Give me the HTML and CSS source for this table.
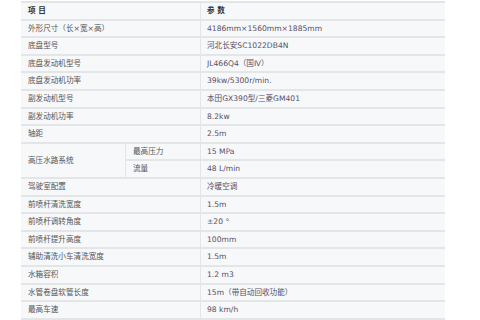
FILE: index.html
```html
<!DOCTYPE html>
<html lang="zh">
<head>
<meta charset="utf-8">
<title>参数</title>
<link rel="stylesheet" href="styles.css">
</head>
<body>
<table class="spec">
  <colgroup><col class="c1"><col class="c2"><col class="c3"></colgroup>
  <tr class="head"><td colspan="2">项 目</td><td class="val">参 数</td></tr>
  <tr><td colspan="2">外形尺寸（长×宽×高）</td><td class="val">4186mm×1560mm×1885mm</td></tr>
  <tr><td colspan="2">底盘型号</td><td class="val">河北长安SC1022DB4N</td></tr>
  <tr><td colspan="2">底盘发动机型号</td><td class="val">JL466Q4（国Ⅳ）</td></tr>
  <tr><td colspan="2">底盘发动机功率</td><td class="val">39kw/5300r/min.</td></tr>
  <tr><td colspan="2">副发动机型号</td><td class="val">本田GX390型/三菱GM401</td></tr>
  <tr><td colspan="2">副发动机功率</td><td class="val">8.2kw</td></tr>
  <tr><td colspan="2">轴距</td><td class="val">2.5m</td></tr>
  <tr><td rowspan="2" class="merge">高压水路系统</td><td class="sub">最高压力</td><td class="val">15 MPa</td></tr>
  <tr><td class="sub">流量</td><td class="val">48 L/min</td></tr>
  <tr><td colspan="2">驾驶室配置</td><td class="val">冷暖空调</td></tr>
  <tr><td colspan="2">前喷杆清洗宽度</td><td class="val">1.5m</td></tr>
  <tr><td colspan="2">前喷杆调转角度</td><td class="val">±20 °</td></tr>
  <tr><td colspan="2">前喷杆提升高度</td><td class="val">100mm</td></tr>
  <tr><td colspan="2">辅助清洗小车清洗宽度</td><td class="val">1.5m</td></tr>
  <tr><td colspan="2">水箱容积</td><td class="val">1.2 m3</td></tr>
  <tr><td colspan="2">水管卷盘软管长度</td><td class="val">15m（带自动回收功能）</td></tr>
  <tr><td colspan="2">最高车速</td><td class="val">98 km/h</td></tr>
</table>
</body>
</html>
```
FILE: styles.css
```css
html, body {
  margin: 0;
  padding: 0;
  background: #ffffff;
}
.spec {
  margin: 1px 0 0 21px;
  width: 424px;
  table-layout: fixed;
  border-collapse: separate;
  border-spacing: 0;
  border-top: 2px solid #e4e5e7;
  font-family: "DejaVu Sans", "Noto Sans CJK SC", sans-serif;
  font-size: 7.6px;
  color: #555555;
}
.c1 { width: 104px; }
.c2 { width: 75px; }
.c3 { width: 245px; }
.spec td {
  height: 15.6px;
  line-height: 15.6px;
  padding: 0 0 0 7px;
  background: #f7f8fa;
  border-bottom: 2px solid #e4e5e7;
  vertical-align: middle;
  white-space: nowrap;
  overflow: hidden;
}
.spec td.val {
  padding-left: 6px;
  border-left: 1px solid #e4e5e7;
  color: #584f66;
}
.spec td.sub {
  border-left: 1px solid #e4e5e7;
  padding-left: 7px;
}
.spec .head td {
  font-weight: bold;
  color: #333333;
}
```
